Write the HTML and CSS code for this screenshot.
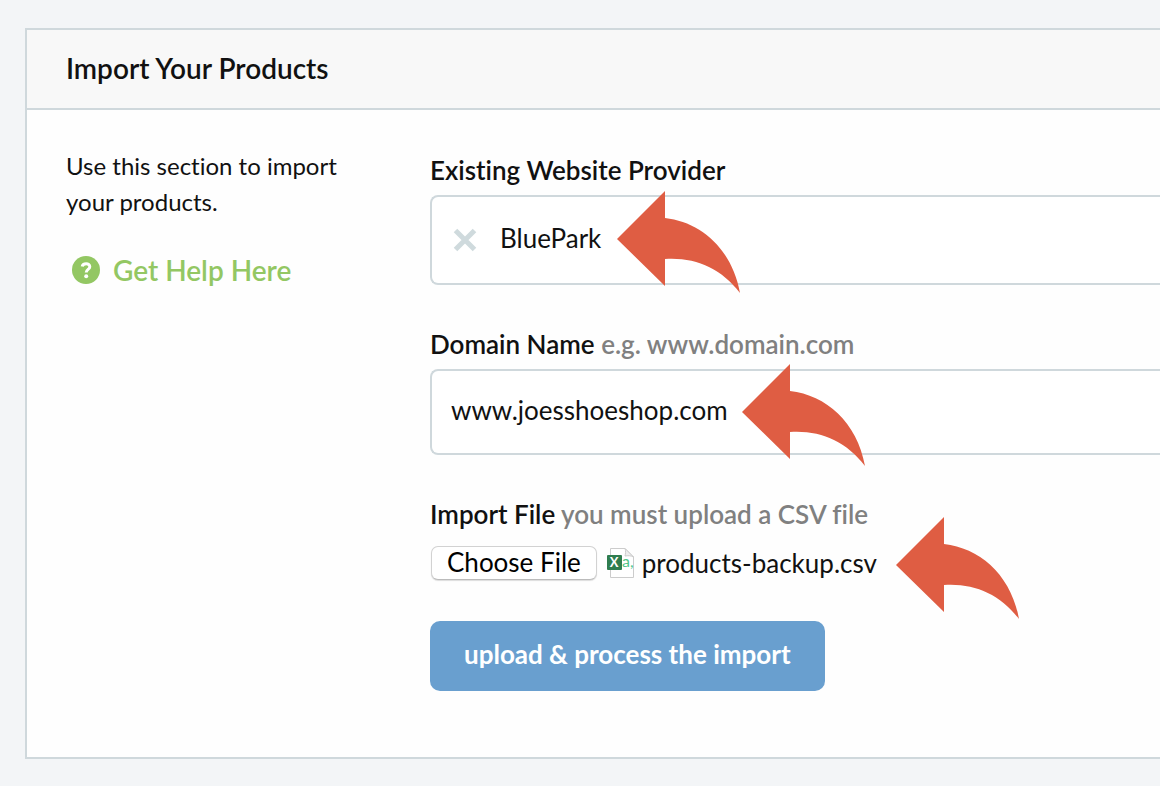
FILE: index.html
```html
<!DOCTYPE html>
<html lang="en">
  <head>
    <meta charset="UTF-8" />
    <meta name="viewport" content="width=device-width, initial-scale=1.0" />
    <title>Import Your Products</title>
    <link rel="stylesheet" href="styles.css">
  </head>
  <body>
    <svg class="defs" aria-hidden="true">
      <symbol id="arrow" viewBox="0 0 124 103">
        <path d="M0 48 L48 0 V27 C84 31 115 58 123 102 C104 77 78 66 48 68 V95 Z" />
      </symbol>
    </svg>
    <main class="panel">
      <header class="panel-header">
        <h1>Import Your Products</h1>
      </header>
      <div class="panel-body">
        <aside class="intro">
          <p>Use this section to import your products.</p>
          <a class="help" href="#help">
            <svg class="help-icon" viewBox="0 0 28 28" aria-hidden="true">
              <circle cx="14" cy="14" r="14" />
              <path d="M10.2 10.6 C10.8 7 17.8 6.600 17.800 10.700 C17.800 13.400 14.200 13.300 14.200 16.400" />
              <circle class="dot" cx="14.200" cy="20.300" r="2" />
            </svg>
            Get Help Here
          </a>
        </aside>
        <form class="form">
          <div class="field">
            <label for="provider">Existing Website Provider</label>
            <div class="box box-select">
              <button class="clear" type="button" aria-label="Clear">
                <svg viewBox="0 0 24 24" aria-hidden="true">
                  <path d="M2.500 2.500 L21.500 21.500 M21.500 2.500 L2.500 21.500" />
                </svg>
              </button>
              <input id="provider" type="text" value="BluePark" />
              <svg class="arrow arrow-provider" aria-hidden="true"><use href="#arrow" /></svg>
            </div>
          </div>
          <div class="field">
            <label for="domain">Domain Name <span>e.g. www.domain.com</span></label>
            <div class="box">
              <input id="domain" type="text" value="www.joesshoeshop.com" />
              <svg class="arrow arrow-domain" aria-hidden="true"><use href="#arrow" /></svg>
            </div>
          </div>
          <div class="field">
            <label for="file">Import File <span>you must upload a CSV file</span></label>
            <div class="file">
              <button class="choose" id="file" type="button">Choose File</button>
              <svg class="file-icon" viewBox="0 0 28 32" aria-hidden="true">
                <path class="page" d="M3.500 1.500 H18 L26.500 10 V30.500 H3.500 Z" />
                <path class="fold" d="M18 1.500 C19 4 18.500 7 18 9 C21 8.500 24 8.500 26.500 10 Z" />
                <rect x="0" y="8" width="15" height="15" rx="1" />
                <text class="x" x="7" y="20" text-anchor="middle">X</text>
                <text class="a" x="15" y="20">a,</text>
              </svg>
              <output class="file-name" for="file">products-backup.csv</output>
              <svg class="arrow arrow-file" aria-hidden="true"><use href="#arrow" /></svg>
            </div>
          </div>
          <button class="submit" type="submit">upload &amp; process the import</button>
        </form>
      </div>
    </main>
  </body>
</html>
```
FILE: styles.css
```css
* {
  box-sizing: border-box;
}
body {
  margin: 0;
  padding: 28px 0 27px 25px;
  background: #f3f5f7;
  color: #111;
  font-family: Lato, 'Liberation Sans', sans-serif;
  font-size: 24px;
  font-variant-ligatures: none;
  line-height: 36px;
}
button,
input {
  font: inherit;
  color: inherit;
}
.defs {
  position: absolute;
  width: 0;
  height: 0;
}
.panel {
  border: 2px solid #cfd8dc;
  border-right: 0;
  background: #fefefe;
}
.panel-header {
  padding: 20px 39px 22px;
  border-bottom: 2px solid #cfd8dc;
  background: #f8f8f8;
}
h1 {
  margin: 0;
  font-size: 28px;
  font-weight: 600;
  line-height: 36px;
}
.panel-body {
  display: grid;
  grid-template-columns: 300px 1fr;
  column-gap: 64px;
  padding: 38px 0 66px 39px;
}
.intro p {
  margin: 0 0 32px;
}
.help {
  display: flex;
  align-items: center;
  gap: 13px;
  padding-left: 6px;
  color: #93c763;
  font-size: 28px;
  font-weight: 600;
  text-decoration: none;
}
.help-icon {
  width: 28px;
  height: 28px;
  fill: #93c763;
}
.help-icon path {
  fill: none;
  stroke: #fff;
  stroke-width: 3;
}
.help-icon .dot {
  fill: #fff;
}
.form {
  padding-top: 4px;
  font-size: 26px;
}
.field {
  margin-bottom: 41px;
}
label {
  display: block;
  margin-bottom: 7px;
  font-weight: 600;
}
label span {
  color: #808080;
}
.box {
  position: relative;
  display: flex;
  align-items: center;
  height: 86px;
  padding-left: 19px;
  border: 2px solid #cfd8dc;
  border-right: 0;
  border-radius: 8px 0 0 8px;
  background: #fff;
}
.box-select {
  height: 90px;
  gap: 21px;
}
.box input {
  flex: 1;
  min-width: 0;
  padding: 0 0 4px;
  border: 0;
  outline: 0;
  background: none;
}
.clear {
  display: flex;
  padding: 2px;
  border: 0;
  background: none;
}
.clear svg {
  width: 24px;
  height: 24px;
  stroke: #cfdadd;
  stroke-width: 5;
}

/* arrows lie over the fields */
.arrow {
  position: absolute;
  width: 124px;
  height: 103px;
  fill: #df5d43;
}
.arrow-provider {
  left: 185px;
  top: -6px;
}
.arrow-domain {
  left: 310px;
  top: -7px;
}
.arrow-file {
  left: 466px;
  top: -28px;
}

.file {
  position: relative;
  display: flex;
  align-items: center;
  height: 35px;
  margin-top: 13px;
}
.choose {
  height: 34px;
  margin: 0 10px 0 1px;
  padding: 0 15px 2px;
  border: 1px solid #d2d2d2;
  border-bottom-color: #bbb;
  border-radius: 7px;
  background: #fff;
  box-shadow: 0 1px 1px #ddd;
  color: #000;
  line-height: 30px;
}
.file-icon {
  width: 28px;
  height: 32px;
  margin-right: 7px;
}
.file-icon .page {
  fill: #fff;
  stroke: #ccc;
}
.file-icon .fold {
  fill: #eee;
  stroke: #ccc;
}
.file-icon rect {
  fill: #2f7d4f;
}
.file-icon .x {
  fill: #fff;
  font-size: 13px;
  font-weight: 700;
}
.file-icon .a {
  fill: #4fc587;
  font-size: 16px;
}
.submit {
  display: block;
  height: 70px;
  padding: 0 34px 4px;
  border: 0;
  border-radius: 10px;
  background: #699fcf;
  color: #fff;
  font-weight: 700;
}
```
